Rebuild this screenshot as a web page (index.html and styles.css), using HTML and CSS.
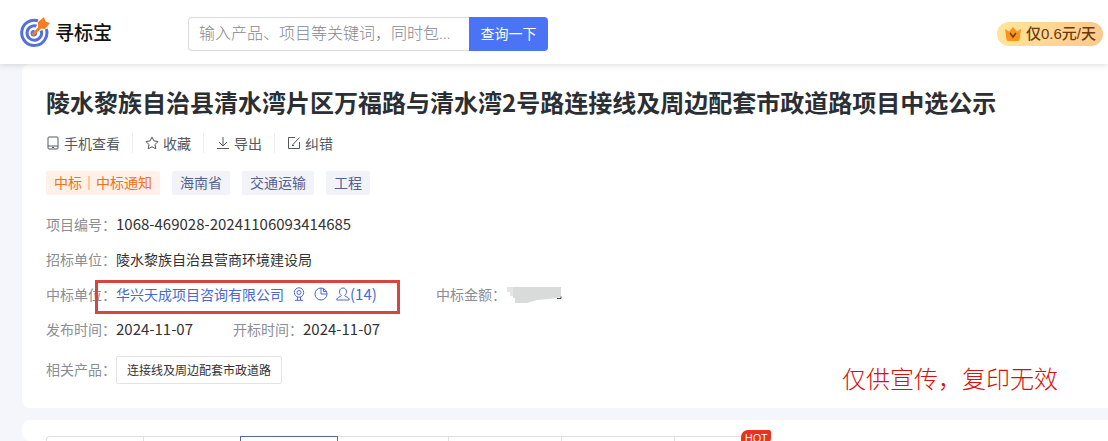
FILE: index.html
```html
<!DOCTYPE html>
<html lang="zh-CN">
<head>
    <meta charset="UTF-8">
    <meta name="viewport" content="width=device-width, initial-scale=1.0">
    <title>寻标宝</title>
    <link rel="stylesheet" href="styles.css">
</head>
<body>

    <header class="header">
        <a class="logo" href="#">
            <svg class="logo-icon" viewBox="0 0 30 30" aria-hidden="true">
                <g fill="none" stroke="#5470dc" stroke-width="3">
                    <path d="M18 3.800A12.600 12.600 0 1 0 26.300 12"/>
                    <path d="M16.500 9A7.300 7.300 0 1 0 21.200 13.500"/>
                </g>
                <path d="M14 13a3.200 3.200 0 1 0 3 3z" fill="#5470dc"/>
                <path d="M12.500 18L22 8.500" stroke="#f77c22" stroke-width="3"/>
                <path d="M18 11V5L24 0l1.500 4.500L30 6l-5 6z" fill="#f77c22"/>
            </svg>
            <span>寻标宝</span>
        </a>
        <form class="search">
            <input class="search-input" type="text" aria-label="搜索" placeholder="输入产品、项目等关键词，同时包含多个关键词">
            <button class="search-btn" type="button">查询一下</button>
        </form>
        <a class="vip" href="#">
            <svg class="vip-icon" viewBox="0 0 18 16" aria-hidden="true">
                <path d="M1 3l4 2.500L9 1l4 4.500L17 3l-1.500 10.500q-.2 1.500-1.700 1.500H4.200q-1.500 0-1.700-1.500z" fill="#fb9418"/>
                <path d="M6 7L9 11 12 7" fill="none" stroke="#6b3a0c" stroke-width="1.500"/>
            </svg>
            <span>仅0.6元/天</span>
        </a>
    </header>

    <main class="main">
        <section class="card detail">
            <h1 class="title">陵水黎族自治县清水湾片区万福路与清水湾2号路连接线及周边配套市政道路项目中选公示</h1>

            <div class="actions">
                <button class="action" type="button">
                    <svg class="icon" viewBox="0 0 14 14" aria-hidden="true"><rect x="2" y="1" width="10" height="12" rx="1"/><path d="M2 10h10M6 11.500h2"/></svg>
                    手机查看
                </button>
                <button class="action" type="button">
                    <svg class="icon" viewBox="0 0 14 14" aria-hidden="true"><path d="M7 1l1.900 3.900 4.200.6-3.100 3 .8 4.300L7 10.800l-3.800 2 .8-4.300-3.100-3 4.200-.6z"/></svg>
                    收藏
                </button>
                <button class="action" type="button">
                    <svg class="icon" viewBox="0 0 14 14" aria-hidden="true"><path d="M7 1v9M3 6l4 4 4-4M1 12.500h12"/></svg>
                    导出
                </button>
                <button class="action" type="button">
                    <svg class="icon" viewBox="0 0 14 14" aria-hidden="true"><path d="M8 1.500H1.500v11h11V6M5.500 9L12.500 1.500M5 9.500h2"/></svg>
                    纠错
                </button>
            </div>

            <div class="tags">
                <span class="tag tag-orange">中标｜中标通知</span>
                <span class="tag">海南省</span>
                <span class="tag">交通运输</span>
                <span class="tag">工程</span>
            </div>

            <dl class="info">
                <div class="row">
                    <dt>项目编号：</dt>
                    <dd class="number">1068-469028-20241106093414685</dd>
                </div>
                <div class="row">
                    <dt>招标单位：</dt>
                    <dd>陵水黎族自治县营商环境建设局</dd>
                </div>
                <div class="row winner">
                    <dt>中标单位：</dt>
                    <dd class="company">
                        <a href="#">华兴天成项目咨询有限公司</a>
                        <svg class="icon" viewBox="0 0 14 14" aria-hidden="true"><circle cx="7" cy="5.500" r="4.700"/><circle cx="7" cy="5.500" r="2"/><path d="M5.500 10v3M8.500 10v3M3 13.300h8"/></svg>
                        <svg class="icon" viewBox="0 0 14 14" aria-hidden="true"><circle cx="7" cy="7" r="6"/><path d="M7 1v6h6M9.500 1.500v3h3"/></svg>
                        <a class="contacts number" href="#">
                            <svg class="icon" viewBox="0 0 14 14" aria-hidden="true"><path d="M5.300 8.500C2.500 6.500 3 1 7 1s4.500 5.500 1.700 7.500c0 1.500 4.500 1 4.500 4.500H.8c0-3.500 4.500-3 4.500-4.500z"/></svg>(14)
                        </a>
                    </dd>
                    <dt>中标金额：</dt>
                    <dd>
                        <svg class="masked" viewBox="0 0 58 18" role="img" aria-label="金额">
                            <path d="M1 2h20v9H4V7H1z" fill="#e5e5e5"/>
                            <path d="M7 2h48v10l-12 2-12 1-10 3H9v-5H7z" fill="#d9dada"/>
                            <path d="M51 13.500h4v-2" fill="none" stroke="#444"/>
                        </svg>
                    </dd>
                    <dd class="mark"></dd>
                </div>
                <div class="row">
                    <dt>发布时间：</dt>
                    <dd class="number">2024-11-07</dd>
                    <dt class="open-date">开标时间：</dt>
                    <dd class="number">2024-11-07</dd>
                </div>
                <div class="row">
                    <dt>相关产品：</dt>
                    <dd><a class="product" href="#">连接线及周边配套市政道路</a></dd>
                </div>
            </dl>

            <p class="notice">仅供宣传，复印无效</p>
        </section>

        <section class="card sections">
            <ul class="tabs">
                <li class="tab"></li>
                <li class="tab"></li>
                <li class="tab active"></li>
                <li class="tab after"></li>
                <li class="tab wide"></li>
                <li class="tab wide"></li>
                <li class="tab"><span class="hot">HOT</span></li>
            </ul>
        </section>
    </main>

</body>
</html>
```
FILE: styles.css
```css
* {
    margin: 0;
    padding: 0;
    box-sizing: border-box;
}

body {
    display: flex;
    flex-direction: column;
    height: 100vh;
    overflow: hidden;
    background: #f5f6fb;
    color: #333;
    font-family: "Noto Sans CJK SC", sans-serif;
    font-size: 14px;
    line-height: 20px;
}

a {
    color: inherit;
    text-decoration: none;
}

button, input {
    border: none;
    background: none;
    color: inherit;
    font: inherit;
}

button {
    cursor: pointer;
}

/* Header */
.header {
    position: relative;
    z-index: 1;
    display: flex;
    flex: none;
    align-items: center;
    height: 64px;
    padding: 4px 5px 0 20px;
    background: #fff;
    box-shadow: 0 1px 6px rgba(0, 0, 0, 0.14);
}

.logo {
    display: flex;
    align-items: center;
    gap: 5px;
    width: 168px;
    padding-bottom: 4px;
    color: #111;
    font-size: 19px;
    font-weight: 500;
}

.logo-icon {
    width: 30px;
    height: 30px;
}

.search {
    display: flex;
    width: 360px;
    height: 34px;
}

.search-input {
    flex: 1;
    min-width: 0;
    padding: 0 12px 2px 10px;
    border: 1px solid #d9dade;
    border-right: none;
    border-radius: 4px 0 0 4px;
    font-family: "Open Sans", "Noto Sans CJK SC", sans-serif;
    font-size: 16px;
    font-weight: 300;
    text-overflow: ellipsis;
    outline: none;
}

.search-input::placeholder {
    color: #85878f;
}

.search-btn {
    width: 79px;
    padding-bottom: 2px;
    border-radius: 0 4px 4px 0;
    background: #4a74f5;
    color: #fff;
}

.vip {
    display: flex;
    align-items: center;
    gap: 4px;
    height: 24px;
    margin-left: auto;
    padding: 0 7px;
    border-radius: 12px;
    background: linear-gradient(90deg, #fee59c, #fdc98a);
    color: #6b3a0c;
    font-family: "Liberation Sans", "Noto Sans CJK SC", sans-serif;
    font-size: 15px;
    font-weight: 500;
}

.vip-icon {
    width: 18px;
    height: 16px;
}

/* Detail card */
.main {
    display: flex;
    flex: 1;
    flex-direction: column;
    gap: 12px;
    min-height: 0;
    padding-left: 22px;
}

.card {
    background: #fff;
    border-radius: 8px 0 0 8px;
}

.detail {
    position: relative;
    flex: none;
    padding: 22px 24px 24px;
}

.title {
    color: #2b2f33;
    font-size: 24px;
    line-height: 32px;
}

.icon {
    flex: none;
    width: 14px;
    height: 14px;
    fill: none;
    stroke: currentColor;
}

.actions {
    display: flex;
    margin-top: 15px;
}

.action {
    display: flex;
    align-items: center;
    gap: 4px;
    color: #55585e;
}

.action + .action {
    margin-left: 12px;
    padding-left: 12px;
    border-left: 1px solid #eceef2;
}

.tags {
    display: flex;
    gap: 12px;
    margin-top: 18px;
}

.tag {
    padding: 0 8px 2px;
    border-radius: 2px;
    background: #f2f3f8;
    color: #52628f;
    line-height: 22px;
}

.tag-orange {
    background: #fff0e8;
    color: #f0701c;
}

.info {
    display: flex;
    flex-direction: column;
    gap: 15px;
    margin-top: 19px;
}

.row {
    display: flex;
    align-items: center;
}

dt {
    width: 70px;
    color: #8b8e95;
}

.number {
    font-size: 15px;
}

.winner {
    position: relative;
}

.company {
    display: flex;
    align-items: center;
    gap: 8px;
    width: 320px;
    color: #4a68d4;
}

.contacts {
    display: flex;
    align-items: center;
}

.masked {
    display: block;
    width: 58px;
    height: 18px;
}

/* Red frame around the winning company */
.mark {
    position: absolute;
    top: -4px;
    left: 49px;
    width: 305px;
    height: 34px;
    border: 3px solid #d94440;
    pointer-events: none;
}

.open-date {
    margin-left: 40px;
}

.product {
    display: block;
    margin-top: 2px;
    padding: 0 10px;
    border: 1px solid #e3e4e8;
    border-radius: 2px;
    font-size: 12px;
    line-height: 26px;
}

.notice {
    position: absolute;
    right: 50px;
    bottom: 14px;
    color: #d8100c;
    font-size: 24px;
    font-weight: 300;
    line-height: 32px;
}

/* Section tabs */
.sections {
    flex: 1;
    min-height: 0;
    padding: 16px 24px 0;
    overflow: hidden;
}

.tabs {
    display: flex;
    height: 100%;
    list-style: none;
}

.tab {
    position: relative;
    width: 97px;
    border: 1px solid #dfe0e6;
    border-width: 1px 0 0 1px;
}

.tab:first-child {
    border-radius: 4px 0 0 0;
}

.tab.wide {
    width: 113px;
}

.tab.active {
    width: 98px;
    border-width: 1px 1px 0;
    border-color: #5864a8;
}

.tab.after {
    width: 110px;
    border-left: none;
}

.hot {
    position: absolute;
    top: -7px;
    right: 0;
    width: 30px;
    border-radius: 7px 2px 7px 0;
    background: #e8341c;
    color: #fff;
    font-family: "Open Sans", sans-serif;
    font-size: 11px;
    line-height: 15px;
    text-align: center;
}
```
